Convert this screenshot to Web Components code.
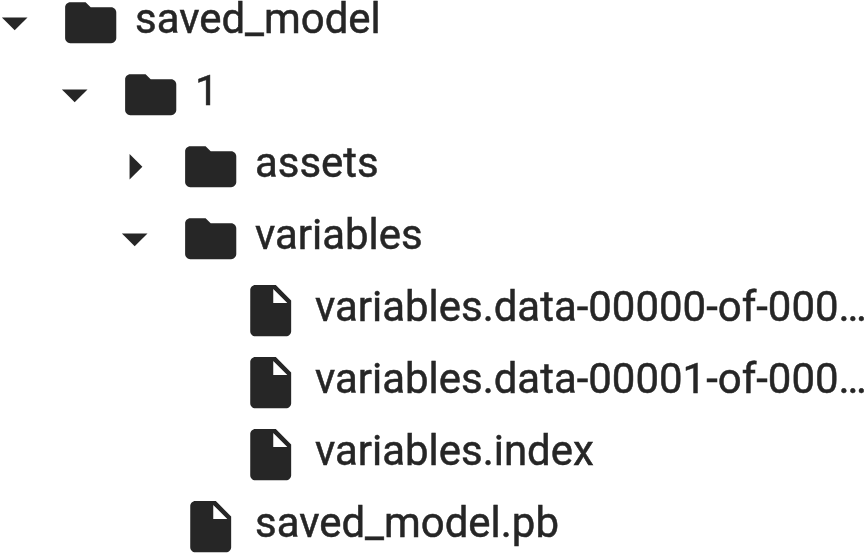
<!DOCTYPE html>
<html lang="en">
<head>
<meta charset="utf-8">
<title>saved_model</title>
<style>
html, body { margin: 0; height: 100%; overflow: hidden; background: #fff; }
</style>
</head>
<body>
<file-tree>
  <tree-folder name="saved_model" open>
    <tree-folder name="1" open>
      <tree-folder name="assets"></tree-folder>
      <tree-folder name="variables" open>
        <tree-file name="variables.data-00000-of-000…"></tree-file>
        <tree-file name="variables.data-00001-of-000…"></tree-file>
        <tree-file name="variables.index"></tree-file>
      </tree-folder>
      <tree-file name="saved_model.pb"></tree-file>
    </tree-folder>
  </tree-folder>
</file-tree>
<script>
const rowStyle = `
  :host { display: block; }
  .row { display: flex; align-items: center; height: 72px; }
  .toggle, .icon { flex: none; width: 61.4px; height: 61.4px; fill: currentColor; }
  .toggle { margin-left: -15.7px; }
  .icon { margin-left: 14.6px; }
  .name { margin-left: 13.3px; line-height: 48px; padding-bottom: 8px; white-space: nowrap;
    -webkit-text-stroke: 0.5px currentColor; }
  .children { margin-left: 60px; }
`;

class FileTree extends HTMLElement {
  constructor() {
    super();
    this.attachShadow({ mode: 'open' }).innerHTML = `
      <style>
        :host { display: block; height: 554px; overflow: hidden; color: #262626;
          font: 400 41.95px Roboto, sans-serif; }
        .list { margin-top: -13px; filter: blur(0.6px); }
      </style>
      <div class="list"><slot></slot></div>`;
  }
}

class TreeFolder extends HTMLElement {
  constructor() {
    super();
    this.attachShadow({ mode: 'open' });
  }
  connectedCallback() {
    const arrow = this.hasAttribute('open') ? 'M7 10l5 5 5-5z' : 'M10 17l5-5-5-5z';
    this.shadowRoot.innerHTML = `
      <style>${rowStyle}</style>
      <div class="row">
        <svg class="toggle" viewBox="0 0 24 24"><path d="${arrow}"/></svg>
        <svg class="icon" viewBox="0 0 24 24"><path d="M10 4H4c-1.1 0-1.99.9-1.99 2L2 18c0 1.1.9 2 2 2h16c1.1 0 2-.9 2-2V8c0-1.1-.9-2-2-2h-8l-2-2z"/></svg>
        <span class="name"></span>
      </div>
      <div class="children"><slot></slot></div>`;
    this.shadowRoot.querySelector('.name').textContent = this.getAttribute('name');
  }
}

class TreeFile extends HTMLElement {
  constructor() {
    super();
    this.attachShadow({ mode: 'open' });
  }
  connectedCallback() {
    this.shadowRoot.innerHTML = `
      <style>${rowStyle}</style>
      <div class="row">
        <span class="toggle"></span>
        <svg class="icon" viewBox="0 0 24 24"><path d="M6 2c-1.1 0-1.99.9-1.99 2L4 20c0 1.1.89 2 1.99 2H18c1.1 0 2-.9 2-2V8l-6-6H6zm7 7V3.5L18.5 9H13z"/></svg>
        <span class="name"></span>
      </div>`;
    this.shadowRoot.querySelector('.name').textContent = this.getAttribute('name');
  }
}

customElements.define('file-tree', FileTree);
customElements.define('tree-folder', TreeFolder);
customElements.define('tree-file', TreeFile);
</script>
</body>
</html>
